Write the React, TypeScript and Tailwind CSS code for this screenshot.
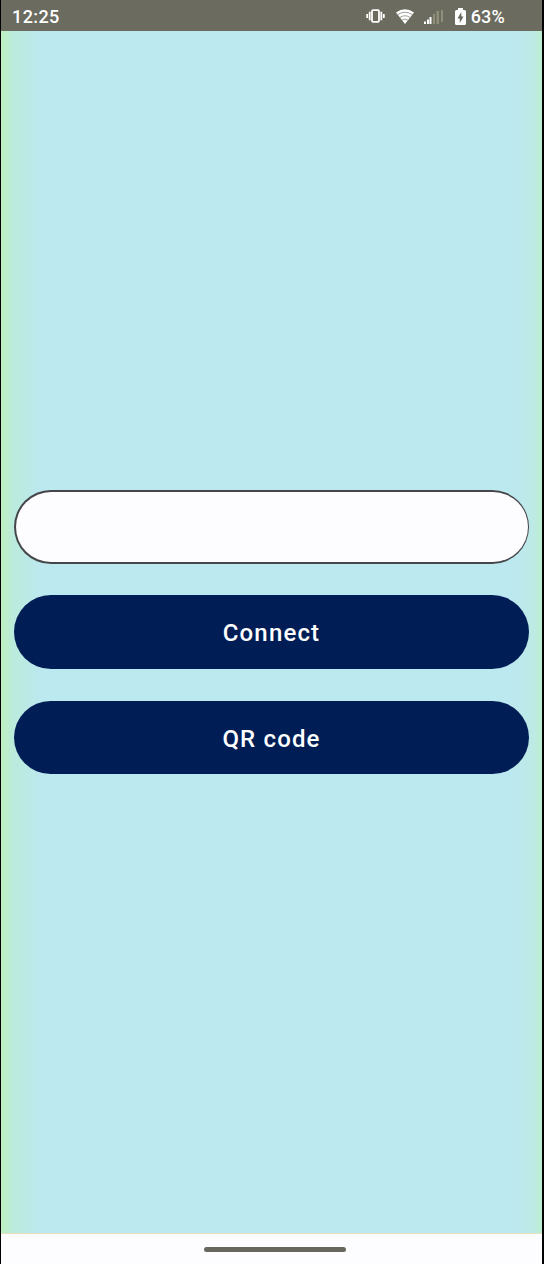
import React from "react";

function VibrateIcon() {
  return (
    <svg className="h-[14px] w-[19px]" viewBox="0 0 19 14" fill="none" stroke="#fff">
      <rect x="6" y="1.2" width="7" height="11.6" rx="1" strokeWidth="1.8" />
      <path d="M3.7 2.8v8.4M15.3 2.8v8.4" strokeWidth="1.8" />
      <path d="M1.2 5v4M17.8 5v4" strokeWidth="1.8" />
    </svg>
  );
}

function WifiIcon() {
  return (
    <svg className="h-[15px] w-[18px]" viewBox="0 0 18 15">
      <path d="M0 3.5Q9-3 18 3.5L9 15z" fill="#fff" />
      <path d="M1.5 5.7Q9 .8 16.5 5.7M3.8 8.5Q9 5 14.2 8.5M6 11.2Q9 9 12 11.2" fill="none" stroke="#77776c" strokeWidth=".7" />
    </svg>
  );
}

function SignalIcon() {
  return (
    <svg className="h-[15px] w-[21px]" viewBox="0 0 21 15">
      <path d="M0 15v-2.5h2V15zM3 15v-4.5h2V15zM5.5 15V8h2v7z" fill="#fff" />
      <path d="M9 15V5h2v10zM12.5 15V2H15v13zM17 13V1h2v12z" fill="#8f8f78" />
    </svg>
  );
}

function BatteryIcon() {
  return (
    <svg className="h-[17px] w-[11px]" viewBox="0 0 11 17">
      <path d="M3 0h5v2h1.5Q11 2 11 3.5v12Q11 17 9.5 17h-8Q0 17 0 15.5v-12Q0 2 1.5 2H3z" fill="#fff" />
      <path d="M6.3 4 2.5 10.5h2.3V15l3.7-6.5H6.3z" fill="#66665c" />
    </svg>
  );
}

function StatusBar() {
  return (
    <header className="flex h-[31px] shrink-0 items-center bg-[#6b6b60] pl-[11px] pt-px text-[18px] font-medium leading-none text-white">
      <span className="pt-[2px] tracking-[0.4px]">12:25</span>
      <div className="ml-auto flex items-center pr-[37px]">
        <VibrateIcon />
        <span className="ml-[11px] flex"><WifiIcon /></span>
        <span className="ml-[10px] flex pt-px"><SignalIcon /></span>
        <span className="ml-[10px] flex"><BatteryIcon /></span>
        <span className="ml-[5px] pt-[2px] tracking-[0.2px]">63%</span>
      </div>
    </header>
  );
}

function PillButton({ children }: { children: React.ReactNode }) {
  return (
    <button className="h-[73.5px] w-full rounded-full bg-[#001e55] pt-[3px] text-[24px] font-medium leading-none tracking-[1.15px] text-white">
      {children}
    </button>
  );
}

export default function App() {
  return (
    <div className="flex h-[1264px] w-[544px] flex-col border-l border-r-2 border-black bg-[#bce8ef] font-['Roboto',sans-serif]">
      <StatusBar />
      <main className="flex flex-1 flex-col bg-[linear-gradient(90deg,#bdf0bd_0,#bbebdc_12px,#bce8ef_40px,#bce8ef_510px,#bdeae6_532px,#bdeed0_100%)] px-[13px] pt-[459px]">
        <div className="h-[73.5px] rounded-full bg-[#45454a] p-[1.5px]">
          <input aria-label="Address" className="block h-full w-full rounded-full bg-[#fdfdff] px-8 text-[24px] outline-none" />
        </div>
        <div className="mt-[31.5px] flex flex-col gap-8">
          <PillButton>Connect</PillButton>
          <PillButton>QR code</PillButton>
        </div>
      </main>
      <footer className="flex h-[31px] shrink-0 justify-center border-t border-[#e5dfbd] bg-[#fdfdff] pt-[13px]">
        <div className="ml-[7px] h-[5px] w-[142px] rounded-full bg-[#68685f]" />
      </footer>
    </div>
  );
}
